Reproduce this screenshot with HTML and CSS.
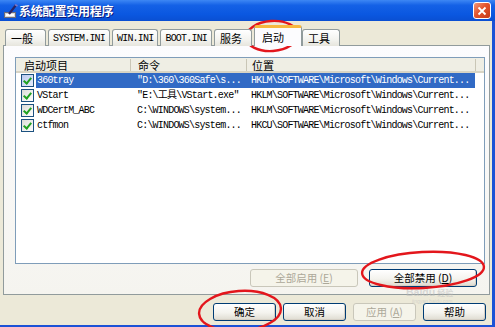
FILE: index.html
```html
<!DOCTYPE html>
<html>
<head>
<meta charset="utf-8">
<title>系统配置实用程序</title>
<link rel="stylesheet" href="styles.css">
</head>
<body>

<div id="window">

<div id="title_bar">
	<svg class="app_icon" width="14" height="15" viewBox="0 0 14 15">
		<rect x="0.5" y="8.5" width="11" height="5" fill="#d8d8d8" stroke="#6b6b7a"/>
		<rect x="2" y="10" width="8" height="2" fill="#ffffff"/>
		<path d="M5 10 L12 1" stroke="#2a2466" stroke-width="2.2"/>
		<path d="M11 0.5 L13.5 2" stroke="#7d78c8" stroke-width="1.5"/>
	</svg>
	<span class="title_text">系统配置实用程序</span>
	<div class="close_btn">
		<svg width="10" height="10" viewBox="0 0 10 10"><path d="M1.5 1.5 L8.5 8.5 M8.5 1.5 L1.5 8.5" stroke="#fff" stroke-width="1.8"/></svg>
	</div>
</div>

<div id="client">

	<div id="tab_row">
		<div class="tab wide">一般</div>
		<div class="tab mono">SYSTEM.INI</div>
		<div class="tab mono">WIN.INI</div>
		<div class="tab mono">BOOT.INI</div>
		<div class="tab">服务</div>
		<div class="tab selected">启动</div>
		<div class="tab">工具</div>
	</div>

	<div id="tab_panel">
		<div id="list_box">
			<div class="list_head">
				<div class="head_col col_name">启动项目</div>
				<div class="head_col col_cmd">命令</div>
				<div class="head_col col_loc">位置</div>
			</div>

			<div class="list_row">
				<div class="chk_cell"><span class="chk on"></span></div>
				<div class="row_body selected">
					<span class="cell name_cell">360tray</span>
					<span class="cell cmd_cell">"D:\360\360Safe\s...</span>
					<span class="cell loc_cell">HKLM\SOFTWARE\Microsoft\Windows\Current...</span>
				</div>
			</div>
			<div class="list_row">
				<div class="chk_cell"><span class="chk"></span></div>
				<div class="row_body">
					<span class="cell name_cell">VStart</span>
					<span class="cell cmd_cell">"E:\工具\VStart.exe"</span>
					<span class="cell loc_cell">HKLM\SOFTWARE\Microsoft\Windows\Current...</span>
				</div>
			</div>
			<div class="list_row">
				<div class="chk_cell"><span class="chk"></span></div>
				<div class="row_body">
					<span class="cell name_cell">WDCertM_ABC</span>
					<span class="cell cmd_cell">C:\WINDOWS\system...</span>
					<span class="cell loc_cell">HKLM\SOFTWARE\Microsoft\Windows\Current...</span>
				</div>
			</div>
			<div class="list_row">
				<div class="chk_cell"><span class="chk"></span></div>
				<div class="row_body">
					<span class="cell name_cell">ctfmon</span>
					<span class="cell cmd_cell">C:\WINDOWS\system...</span>
					<span class="cell loc_cell">HKCU\SOFTWARE\Microsoft\Windows\Current...</span>
				</div>
			</div>
		</div>

		<div id="list_buttons">
			<div class="btn big disabled">全部启用 (<u>E</u>)</div>
			<div class="btn big">全部禁用 (<u>D</u>)</div>
		</div>
	</div>

	<div id="dialog_buttons">
		<div class="btn">确定</div>
		<div class="btn">取消</div>
		<div class="btn disabled">应用 (<u>A</u>)</div>
		<div class="btn">帮助</div>
	</div>

</div>

<!-- watermark and the red marks drawn over the screenshot -->
<div id="watermark">
	<div class="wm_line"><span class="wm_big">Baidu</span><span class="wm_cn">经验</span></div>
	<div class="wm_small">jingyan.baidu.com</div>
</div>

<svg id="marks" width="495" height="327" viewBox="0 0 495 327">
	<ellipse cx="272" cy="36" rx="26" ry="15" transform="rotate(-4 272 36)" fill="none" stroke="#e3161c" stroke-width="2.4"/>
	<ellipse cx="423" cy="270" rx="61" ry="18" transform="rotate(-3 423 270)" fill="none" stroke="#e3161c" stroke-width="2.4"/>
	<ellipse cx="240" cy="311" rx="41" ry="20" transform="rotate(-4 240 311)" fill="none" stroke="#e3161c" stroke-width="2.4"/>
</svg>

</div>

</body>
</html>
```

FILE: styles.css
```css
body {
	margin: 0px;
	padding: 0px;
	background: #ece9d8;
	color: #000;
	font-family: "Noto Sans CJK SC", sans-serif;
	font-size: 10.5px;
}

#window {
	position: relative;
	width: 495px;
	height: 327px;
	overflow: hidden;
	background: #ece9d8;
}

/* title bar */
#title_bar {
	display: flex;
	align-items: center;
	height: 21px;
	padding: 0px 4px 0px 4px;
	background: linear-gradient(#3d87f4, #1461e6 25%, #0a57e0 70%, #0a4fd2);
	color: #fff;
}
.app_icon {
	margin-right: 1px;
	margin-top: 1px;
}
.title_text {
	flex: 1;
	font-size: 12px;
	font-weight: bold;
	letter-spacing: -0.2px;
	text-shadow: 1px 1px #0a1a7a;
}
.close_btn {
	display: flex;
	align-items: center;
	justify-content: center;
	width: 16px;
	height: 15px;
	border: 1px solid #fff;
	border-radius: 3px;
	background: linear-gradient(135deg, #f0987a, #e2542d 45%, #c43a18);
}

/* client area */
#client {
	display: flex;
	flex-direction: column;
	height: 304px;
	padding: 0px 2px 0px 3px;
	border-right: 3px solid #1c52d6;
	border-bottom: 2px solid #1c52d6;
}

#tab_row {
	display: flex;
	align-items: flex-end;
	height: 20px;
	margin-top: 5px;
	padding-left: 2px;
	position: relative;
	z-index: 2;
}
.tab {
	box-sizing: border-box;
	height: 17px;
	min-width: 38px;
	margin-right: 2px;
	padding: 0px 4px 0px 5px;
	border: 1px solid #919b9c;
	border-bottom: none;
	border-radius: 3px 3px 0px 0px;
	background: linear-gradient(#ffffff, #f3f3ef 60%, #e6e5dd);
	font-size: 11px;
	line-height: 17px;
}
.tab.wide {
	min-width: 41px;
}
.tab.mono {
	padding: 0px 4px 0px 4px;
	font-family: "Liberation Mono", monospace;
	font-size: 10px;
	letter-spacing: -0.8px;
}
.tab.selected {
	height: 21px;
	min-width: 48px;
	margin-right: 0px;
	padding-left: 7px;
	border-top: 3px solid #f7b83e;
	background: #fcfcfe;
	line-height: 18px;
}

#tab_panel {
	display: flex;
	flex-direction: column;
	height: 250px;
	box-sizing: border-box;
	margin-top: -1px;
	padding: 11px 4px 7px 11px;
	border: 1px solid #919b9c;
	background: linear-gradient(#fcfcfe, #f5f4ef);
}

/* list view */
#list_box {
	height: 207px;
	box-sizing: border-box;
	border: 1px solid #7f9db9;
	background: #fff;
}
.list_head {
	display: flex;
	height: 15px;
	box-sizing: border-box;
	background: #efeee4;
	border-bottom: 2px solid #d8d4c4;
}
.head_col {
	box-sizing: border-box;
	height: 12px;
	margin-top: 1px;
	padding-left: 8px;
	border-right: 1px solid #c9c6b6;
	font-size: 11px;
	line-height: 12px;
}
.head_col.col_name {
	width: 115px;
}
.head_col.col_cmd {
	width: 116px;
	padding-left: 7px;
}
.head_col.col_loc {
	width: 229px;
	padding-left: 5px;
}

.list_row {
	display: flex;
	height: 15px;
	font-family: "Liberation Mono", "Noto Sans CJK SC", monospace;
	font-size: 10px;
	letter-spacing: -0.8px;
}
.chk_cell {
	width: 20px;
	box-sizing: border-box;
	padding: 1px 0px 0px 5px;
}
.chk {
	display: block;
	position: relative;
	width: 13px;
	height: 13px;
	box-sizing: border-box;
	border: 1px solid #1c5180;
	background: linear-gradient(135deg, #dcdcd7, #fff);
}
.chk.on {
	background: linear-gradient(135deg, #b9c9ef, #e8eefb);
}
.chk::after {
	content: "";
	position: absolute;
	left: 3px;
	top: 1px;
	width: 3px;
	height: 6px;
	border: solid #21a121;
	border-width: 0px 2px 2px 0px;
	transform: rotate(40deg);
}
.row_body {
	display: flex;
	height: 15px;
	line-height: 15px;
	white-space: nowrap;
}
.row_body.selected {
	background: #316ac5;
	color: #fff;
}
.cell {
	display: block;
	box-sizing: border-box;
	overflow: hidden;
}
.name_cell {
	width: 95px;
	padding-left: 1px;
}
.cmd_cell {
	width: 115px;
	padding-left: 6px;
}
.loc_cell {
	width: 229px;
	padding-left: 5px;
}

/* buttons */
#list_buttons {
	display: flex;
	justify-content: flex-end;
	gap: 11px;
	margin-top: 5px;
	padding-right: 8px;
}
#dialog_buttons {
	display: flex;
	justify-content: flex-end;
	gap: 7px;
	margin-top: 8px;
	padding-right: 4px;
}
.btn {
	display: flex;
	align-items: center;
	justify-content: center;
	width: 63px;
	height: 18px;
	box-sizing: border-box;
	border: 1px solid #003c74;
	border-radius: 3px;
	background: linear-gradient(#ffffff, #f4f3ee 55%, #dedbd0);
	box-shadow: inset -1px -1px #d6d0c5;
	line-height: 14px;
}
.btn.big {
	width: 108px;
}
.btn.disabled {
	border-color: #c9c7ba;
	color: #aca899;
	background: #f5f4ea;
	box-shadow: none;
}
.btn u {
	text-decoration: underline;
}

/* overlays */
#watermark {
	position: absolute;
	left: 406px;
	top: 286px;
	color: rgba(185, 185, 185, 0.5);
	font-family: "Liberation Sans", sans-serif;
	font-weight: bold;
}
.wm_line {
	height: 12px;
	line-height: 12px;
}
.wm_big {
	font-size: 10.5px;
}
.wm_cn {
	font-family: "Noto Sans CJK SC", sans-serif;
	font-size: 8px;
	margin-left: 2px;
}
.wm_small {
	height: 6px;
	font-size: 5px;
	font-weight: normal;
	line-height: 6px;
	margin-left: 6px;
}
#marks {
	position: absolute;
	left: 0px;
	top: 0px;
	pointer-events: none;
}
```
